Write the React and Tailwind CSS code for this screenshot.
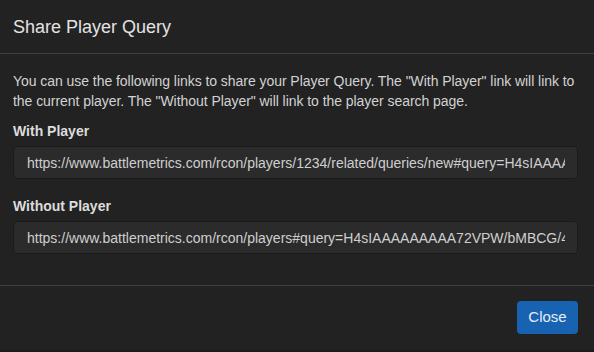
import React from 'react';

const withPlayer =
  'https://www.battlemetrics.com/rcon/players/1234/related/queries/new#query=H4sIAAAAAAAAA72VPW/bMBCG/4';
const withoutPlayer =
  'https://www.battlemetrics.com/rcon/players#query=H4sIAAAAAAAAA72VPW/bMBCG/4xSjQNGJEm';

function LinkField({ label, value, className = '' }) {
  return (
    <div className={className}>
      <label className="block font-bold text-[14px] leading-[20px] text-[#dcdcdc] mb-[5px]">{label}</label>
      <input
        readOnly
        value={value}
        className="block w-full h-[33px] rounded-[4px] border border-[#1b1b1b] bg-[#2b2b2b] pl-[13px] pr-[12px] text-[14px] text-[#cfcfcf] outline-none"
      />
    </div>
  );
}

export default function App() {
  return (
    <div
      className="w-[594px] h-[352px] bg-[#222222] flex flex-col overflow-hidden border-b-2 border-[#1a1a1a]"
      style={{ fontFamily: '"Liberation Sans", Arial, sans-serif' }}
    >
      <div className="h-[54px] shrink-0 border-b border-[#3f3f3f] pl-[13px] flex items-center">
        <h4 className="text-[18px] text-[#e3e3e3] leading-none pt-[1px]">Share Player Query</h4>
      </div>

      <div className="pl-[13px] pr-[16px] pt-[17px] pb-[31px] border-b border-[#3f3f3f]">
        <p className="text-[14px] leading-[20px] text-[#d2d2d2] mb-[10px] mr-[-8px] tracking-[-0.05px]">
          You can use the following links to share your Player Query. The "With Player" link will link to
          the current player. The "Without Player" will link to the player search page.
        </p>
        <LinkField label="With Player" value={withPlayer} />
        <LinkField label="Without Player" value={withoutPlayer} className="mt-[17px]" />
      </div>

      <div className="flex justify-end pr-[16px] pt-[15px]">
        <button className="w-[61px] h-[33px] rounded-[4px] bg-[#1762b1] text-[15px] text-[#e8eef6]">
          Close
        </button>
      </div>
    </div>
  );
}
